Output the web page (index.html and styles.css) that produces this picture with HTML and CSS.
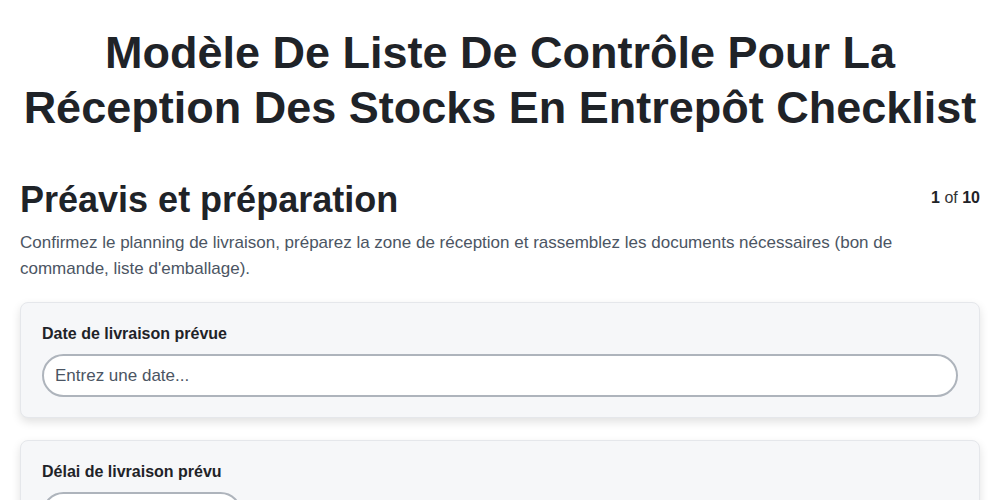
FILE: index.html
```html
<!DOCTYPE html>
<html lang="fr">
<head>
	<meta charset="UTF-8">
	<title>Checklist</title>
	<link rel="stylesheet" href="styles.css">
</head>
<body>
	<div class="page">
		<h1 class="title">Modèle De Liste De Contrôle Pour La Réception Des Stocks En Entrepôt Checklist</h1>

		<div class="step-head">
			<h2 class="step-title">Préavis et préparation</h2>
			<div class="step-count"><b>1</b> of <b>10</b></div>
		</div>
		<p class="step-desc">Confirmez le planning de livraison, préparez la zone de réception et rassemblez les documents nécessaires (bon de commande, liste d'emballage).</p>

		<div class="card">
			<label class="field-label">Date de livraison prévue</label>
			<input class="field" type="text" placeholder="Entrez une date...">
		</div>

		<div class="card">
			<label class="field-label">Délai de livraison prévu</label>
			<input class="field small" type="text">
		</div>
	</div>
</body>
</html>
```

FILE: styles.css
```css
*{
	padding: 0;
	margin: 0;
	box-sizing: border-box;
}
body{
	background-color: #fff;
	font-family: "Liberation Sans", Arial, sans-serif;
	color: #1f2328;
}
.page{
	padding: 25px 20px 20px;
}
.title{
	text-align: center;
	font-size: 45px;
	line-height: 55px;
	font-weight: bold;
	color: #1f2328;
}
.step-head{
	display: flex;
	justify-content: space-between;
	align-items: center;
	margin-top: 44px;
}
.step-title{
	font-size: 36px;
	line-height: 42px;
	font-weight: bold;
}
.step-count{
	font-size: 16px;
	color: #333;
	margin-bottom: 4px;
}
.step-count b{
	color: #1f2328;
}
.step-desc{
	margin-top: 9px;
	font-size: 17px;
	line-height: 26px;
	color: #4b5563;
}
.card{
	margin-top: 20px;
	background: #f6f7f9;
	border: 1px solid #e5e7eb;
	border-radius: 8px;
	padding: 20px 21px 20px;
	box-shadow: 0 4px 10px rgba(0,0,0,0.12);
}
.card + .card{
	margin-top: 22px;
}
.field-label{
	display: block;
	font-size: 16px;
	font-weight: bold;
	line-height: 22px;
	color: #1f2328;
	margin-bottom: 9px;
}
.field{
	display: block;
	width: 100%;
	height: 43px;
	border: 2px solid #aeb4bc;
	border-radius: 22px;
	background: #fff;
	padding: 0 11px;
	font-family: "Liberation Sans", Arial, sans-serif;
	font-size: 17px;
	color: #1f2328;
	outline: none;
}
.field::placeholder{
	color: #4b5563;
}
.field.small{
	width: 200px;
}
```
